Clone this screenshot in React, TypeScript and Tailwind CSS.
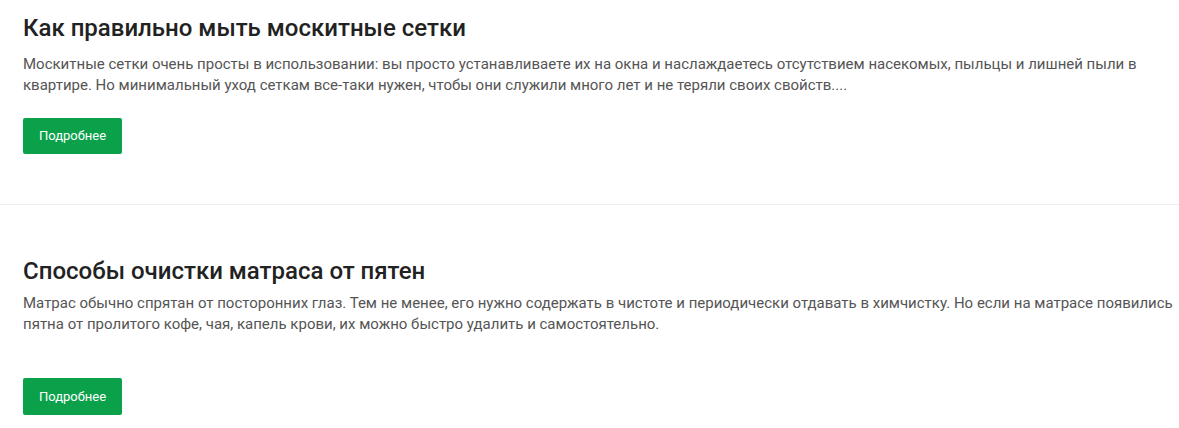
const POSTS = [
  {
    title: "Как правильно мыть москитные сетки",
    text: "Москитные сетки очень просты в использовании: вы просто устанавливаете их на окна и наслаждаетесь отсутствием насекомых, пыльцы и лишней пыли в квартире. Но минимальный уход сеткам все-таки нужен, чтобы они служили много лет и не теряли своих свойств....",
  },
  {
    title: "Способы очистки матраса от пятен",
    text: "Матрас обычно спрятан от посторонних глаз. Тем не менее, его нужно содержать в чистоте и периодически отдавать в химчистку. Но если на матрасе появились пятна от пролитого кофе, чая, капель крови, их можно быстро удалить и самостоятельно.",
  },
];

export default function App() {
  return (
    <div className="w-[1179px] h-[428px] overflow-hidden bg-white font-['Roboto',sans-serif]">
      <article className="pl-[23px] pr-[8px] pt-[12px] pb-[50px] border-b border-[#efefef]">
        <h2 className="text-[24px] leading-[32px] font-medium text-[#222]">{POSTS[0].title}</h2>
        <p className="mt-[10px] text-[15px] leading-[21px] text-[#555]">{POSTS[0].text}</p>
        <button className="mt-[22px] w-[99px] h-[36px] bg-[#0ba14b] rounded-[2px] text-white text-[13px]">
          Подробнее
        </button>
      </article>
      <article className="pl-[23px] pt-[50px]">
        <h2 className="text-[24px] leading-[32px] font-medium text-[#222]">{POSTS[1].title}</h2>
        <p className="mt-[6px] w-[1160px] text-[15px] leading-[21px] text-[#555]">{POSTS[1].text}</p>
        <button className="mt-[43px] w-[99px] h-[37px] bg-[#0ba14b] rounded-[2px] text-white text-[13px]">
          Подробнее
        </button>
      </article>
    </div>
  );
}
